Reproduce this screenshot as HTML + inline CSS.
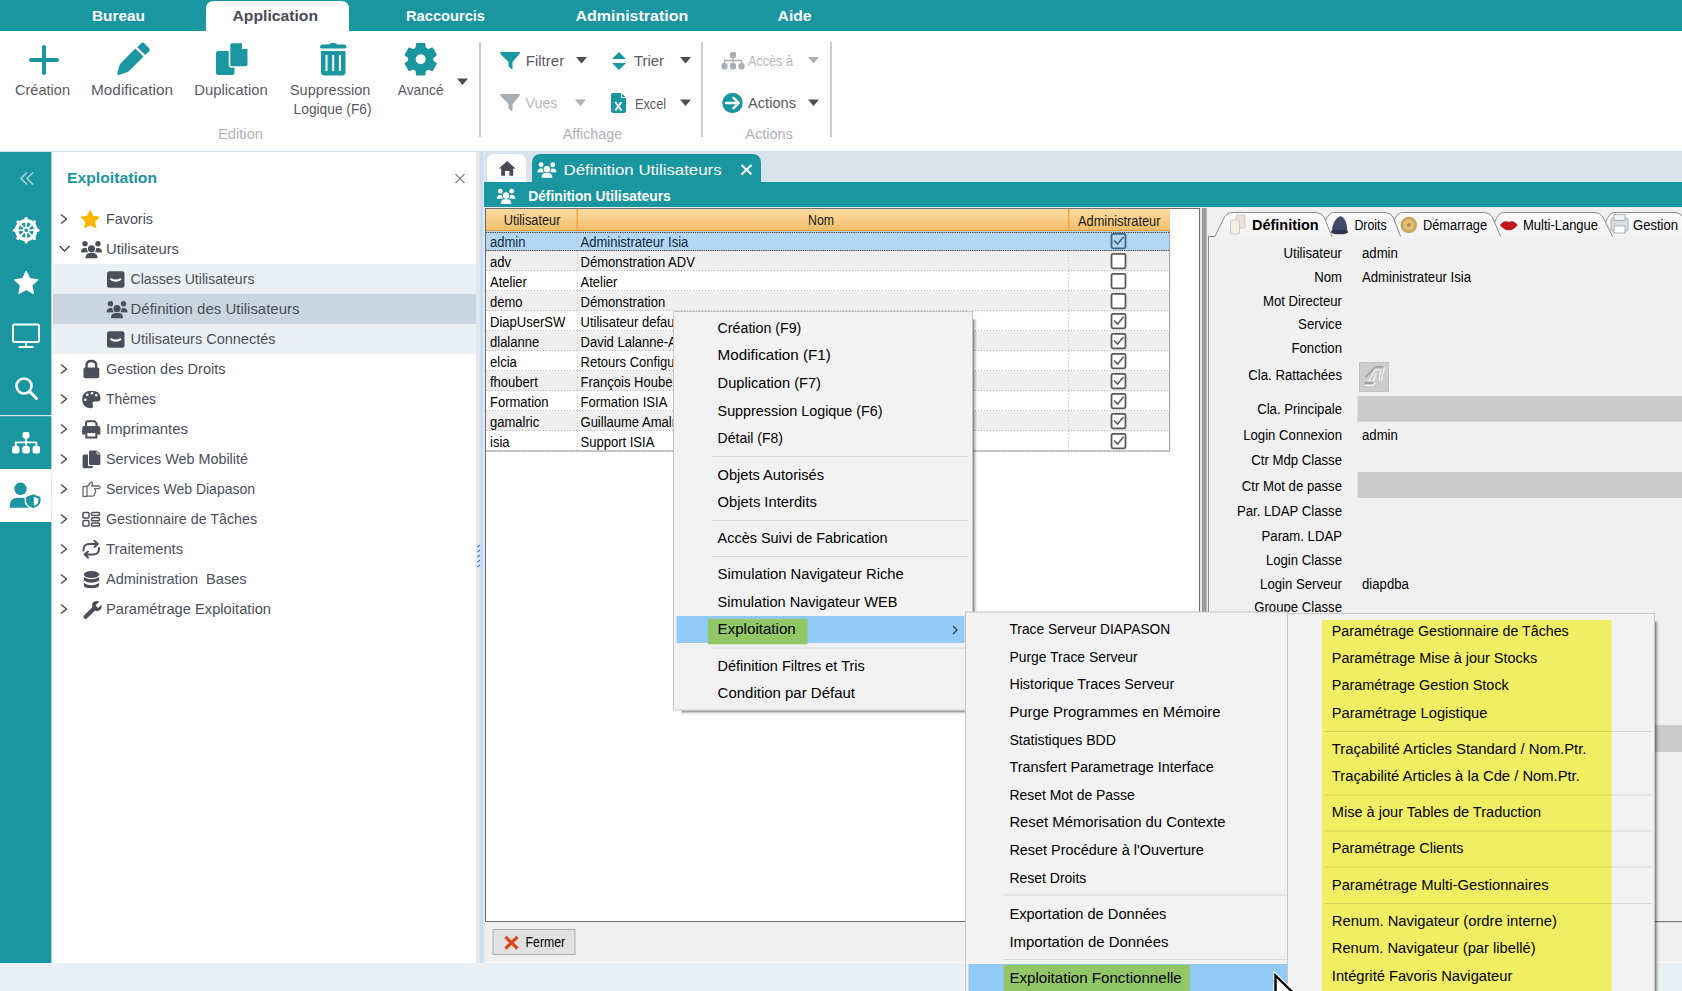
<!DOCTYPE html>
<html><head><meta charset="utf-8"><title>Définition Utilisateurs</title>
<style>
*{margin:0;padding:0}
html,body{width:1682px;height:991px;overflow:hidden;background:#fff}
svg{display:block;font-family:"Liberation Sans",sans-serif}
</style></head><body>
<svg width="1682" height="991" viewBox="0 0 1682 991">
<rect x="0" y="0" width="1682" height="31" fill="#1996a0" />
<path d="M206,31 V9 Q206,1 214,1 H341 Q349,1 349,9 V31 Z" fill="#fff"/>
<text x="92" y="21" font-size="15" fill="#fff" font-weight="bold" textLength="53" lengthAdjust="spacingAndGlyphs" >Bureau</text>
<text x="232.5" y="21" font-size="15" fill="#4a4a58" font-weight="bold" textLength="85.5" lengthAdjust="spacingAndGlyphs" >Application</text>
<text x="406" y="21" font-size="15" fill="#fff" font-weight="bold" textLength="79" lengthAdjust="spacingAndGlyphs" >Raccourcis</text>
<text x="575.5" y="21" font-size="15" fill="#fff" font-weight="bold" textLength="112.7" lengthAdjust="spacingAndGlyphs" >Administration</text>
<text x="777.6" y="21" font-size="15" fill="#fff" font-weight="bold" textLength="34" lengthAdjust="spacingAndGlyphs" >Aide</text>
<rect x="0" y="31" width="1682" height="120" fill="#fff" />
<rect x="0" y="151" width="1682" height="1" fill="#d5e0e8" />
<path d="M44,47 V73 M31,60 H57" stroke="#1996a0" stroke-width="4" stroke-linecap="round"/>
<path d="M117.8,75.2 Q117,74.5 117.5,72.5 L119.5,65.5 Q120,64 121.5,62.5 L135.4,48.6 L143.5,56.6 L129.5,70.5 Q128,72 126.5,72.5 L119.5,74.8 Q118.3,75.4 117.8,75.2 Z" fill="#1996a0"/>
<path d="M137.3,47.2 L141.2,43.3 Q142.7,41.8 144.2,43.3 L149.1,48.2 Q150.6,49.7 149.1,51.2 L145.2,55.1 Z" fill="#1996a0"/>
<path d="M218.5,51 H232 Q234.5,51 234.5,53.5 V72.5 Q234.5,75 232,75 H218.5 Q216,75 216,72.5 V53.5 Q216,51 218.5,51 Z" fill="#1996a0"/>
<path d="M232,42.5 H242.5 L248.3,48.3 V64.5 Q248.3,67 245.8,67 H232 Q229.5,67 229.5,64.5 V45 Q229.5,42.5 232,42.5 Z" fill="#1996a0" stroke="#fff" stroke-width="1.6"/>
<path d="M242.5,42 V48.3 H248.8" fill="#fff" stroke="#fff" stroke-width="1.2"/>
<path d="M320,47 Q320,44.5 323,44.5 H329 Q330,42.7 333,42.7 Q336,42.7 337,44.5 H343.5 Q346.5,44.5 346.5,47 Q346.5,48.5 343.5,48.5 H323 Q320,48.5 320,47 Z" fill="#1996a0"/>
<path d="M321,51 H345.5 V72 Q345.5,75.5 342,75.5 H324.5 Q321,75.5 321,72 Z" fill="#1996a0"/>
<path d="M326.5,55 V71 M333.2,55 V71 M339.9,55 V71" stroke="#fff" stroke-width="2"/>
<path d="M416.83,43.78 L424.57,43.78 L425.20,48.17 L428.09,49.84 L432.21,48.19 L436.08,54.89 L432.58,57.63 L432.58,60.97 L436.08,63.71 L432.21,70.41 L428.09,68.76 L425.20,70.43 L424.57,74.82 L416.83,74.82 L416.20,70.43 L413.31,68.76 L409.19,70.41 L405.32,63.71 L408.82,60.97 L408.82,57.63 L405.32,54.89 L409.19,48.19 L413.31,49.84 L416.20,48.17Z" fill="#1996a0" stroke="#1996a0" stroke-width="1.5" stroke-linejoin="round"/>
<circle cx="420.7" cy="59.3" r="5" fill="#fff"/>
<path d="M457,78.5 H468 L462.5,85.0 Z" fill="#4a4d57"/>
<text x="42.5" y="94.5" font-size="14.6" fill="#5a5a64" text-anchor="middle" textLength="55" lengthAdjust="spacingAndGlyphs" >Création</text>
<text x="132" y="94.5" font-size="14.6" fill="#5a5a64" text-anchor="middle" textLength="82" lengthAdjust="spacingAndGlyphs" >Modification</text>
<text x="231" y="94.5" font-size="14.6" fill="#5a5a64" text-anchor="middle" textLength="73.5" lengthAdjust="spacingAndGlyphs" >Duplication</text>
<text x="330.2" y="94.5" font-size="14.6" fill="#5a5a64" text-anchor="middle" textLength="80.5" lengthAdjust="spacingAndGlyphs" >Suppression</text>
<text x="420.7" y="94.5" font-size="14.6" fill="#5a5a64" text-anchor="middle" textLength="46" lengthAdjust="spacingAndGlyphs" >Avancé</text>
<text x="332.6" y="113.5" font-size="14.6" fill="#5a5a64" text-anchor="middle" textLength="78" lengthAdjust="spacingAndGlyphs" >Logique (F6)</text>
<text x="240.5" y="139" font-size="14" fill="#adb3ba" text-anchor="middle" textLength="45" lengthAdjust="spacingAndGlyphs" >Edition</text>
<rect x="479" y="42" width="2" height="95" fill="#c9cdd2" />
<rect x="701" y="42" width="2" height="95" fill="#c9cdd2" />
<rect x="830" y="42" width="2" height="95" fill="#c9cdd2" />
<path d="M500,52 H520 Q520,53 519,54.5 L512.5,62 V68.5 Q512.5,69.5 511.5,69 L508.5,66.5 V62 L501,54.5 Q500,53 500,52 Z" fill="#1996a0"/>
<text x="525.7" y="65.8" font-size="14.6" fill="#5a5a64" textLength="38.5" lengthAdjust="spacingAndGlyphs" >Filtrer</text>
<path d="M576,57 H587 L581.5,63.5 Z" fill="#4a4d57"/>
<path d="M619,52 L626,59 H612 Z M612,63 H626 L619,70 Z" fill="#1996a0"/>
<text x="634" y="65.8" font-size="14.6" fill="#5a5a64" textLength="30" lengthAdjust="spacingAndGlyphs" >Trier</text>
<path d="M680,57 H691 L685.5,63.5 Z" fill="#4a4d57"/>
<path d="M500,94 H520 Q520,95 519,96.5 L512.5,104 V110.5 Q512.5,111.5 511.5,111 L508.5,108.5 V104 L501,96.5 Q500,95 500,94 Z" fill="#a7aeb6"/>
<text x="525.5" y="108.3" font-size="14.6" fill="#b4bac1" textLength="32" lengthAdjust="spacingAndGlyphs" >Vues</text>
<path d="M575,99.5 H586 L580.5,106.0 Z" fill="#a9b0b8"/>
<path d="M613,93 H621.5 L626,97.5 V111 Q626,113 624,113 H613 Q611,113 611,111 V95 Q611,93 613,93 Z" fill="#1996a0"/>
<path d="M621.5,93 V97.5 H626" fill="none" stroke="#fff" stroke-width="1"/>
<path d="M615.3,102 L621.5,110.5 M621.5,102 L615.3,110.5" stroke="#fff" stroke-width="1.8"/>
<text x="635" y="108.6" font-size="14.6" fill="#5a5a64" textLength="31" lengthAdjust="spacingAndGlyphs" >Excel</text>
<path d="M680,99.5 H691 L685.5,106.0 Z" fill="#4a4d57"/>
<g fill="#a7aeb6"><rect x="730" y="52" width="6" height="6" rx="1.5"/><rect x="721.5" y="63" width="6" height="6.5" rx="2"/><rect x="730" y="63" width="6" height="6.5" rx="2"/><rect x="738.5" y="63" width="6" height="6.5" rx="2"/></g>
<path d="M733,58 V63 M724.5,63 V60.5 H741.5 V63" fill="none" stroke="#a7aeb6" stroke-width="1.3"/>
<text x="748" y="65.8" font-size="14.6" fill="#b4bac1" textLength="45" lengthAdjust="spacingAndGlyphs" >Accès à</text>
<path d="M808,57 H819 L813.5,63.5 Z" fill="#a9b0b8"/>
<circle cx="732.5" cy="103" r="10.2" fill="#1996a0"/>
<path d="M726,103 H738.5 M733.5,97.8 L738.8,103 L733.5,108.2" fill="none" stroke="#fff" stroke-width="2.4" stroke-linecap="round" stroke-linejoin="round"/>
<text x="748" y="107.8" font-size="14.6" fill="#5a5a64" textLength="48" lengthAdjust="spacingAndGlyphs" >Actions</text>
<path d="M808,99.5 H819 L813.5,106.0 Z" fill="#4a4d57"/>
<text x="592.5" y="139" font-size="14" fill="#adb3ba" text-anchor="middle" textLength="59.5" lengthAdjust="spacingAndGlyphs" >Affichage</text>
<text x="769" y="139" font-size="14" fill="#adb3ba" text-anchor="middle" textLength="47.5" lengthAdjust="spacingAndGlyphs" >Actions</text>
<rect x="0" y="152" width="51.6" height="811" fill="#1996a0" />
<path d="M27,172.5 L21,178.5 L27,184.5 M33,172.5 L27,178.5 L33,184.5" fill="none" stroke="#a6d0d4" stroke-width="1.6"/>
<circle cx="26.2" cy="230.2" r="11.2" fill="#fff"/>
<circle cx="37.80" cy="230.20" r="1.7" fill="#fff"/>
<circle cx="34.40" cy="238.40" r="1.7" fill="#fff"/>
<circle cx="26.20" cy="241.80" r="1.7" fill="#fff"/>
<circle cx="18.00" cy="238.40" r="1.7" fill="#fff"/>
<circle cx="14.60" cy="230.20" r="1.7" fill="#fff"/>
<circle cx="18.00" cy="222.00" r="1.7" fill="#fff"/>
<circle cx="26.20" cy="218.60" r="1.7" fill="#fff"/>
<circle cx="34.40" cy="222.00" r="1.7" fill="#fff"/>
<path d="M29.83,230.91 L33.83,231.27 A7.7,7.7 0 0 1 32.35,234.83 L29.27,232.27 Z M28.27,233.27 L30.83,236.35 A7.7,7.7 0 0 1 27.27,237.83 L26.91,233.83 Z M25.49,233.83 L25.13,237.83 A7.7,7.7 0 0 1 21.57,236.35 L24.13,233.27 Z M23.13,232.27 L20.05,234.83 A7.7,7.7 0 0 1 18.57,231.27 L22.57,230.91 Z M22.57,229.49 L18.57,229.13 A7.7,7.7 0 0 1 20.05,225.57 L23.13,228.13 Z M24.13,227.13 L21.57,224.05 A7.7,7.7 0 0 1 25.13,222.57 L25.49,226.57 Z M26.91,226.57 L27.27,222.57 A7.7,7.7 0 0 1 30.83,224.05 L28.27,227.13 Z M29.27,228.13 L32.35,225.57 A7.7,7.7 0 0 1 33.83,229.13 L29.83,229.49 Z " fill="#1996a0"/>
<circle cx="26.2" cy="230.2" r="1.7" fill="#1996a0"/>
<path d="M26.20,271.30 L29.73,278.65 L37.80,279.73 L31.91,285.35 L33.37,293.37 L26.20,289.50 L19.03,293.37 L20.49,285.35 L14.60,279.73 L22.67,278.65Z" fill="#fff" stroke="#fff" stroke-width="1.2" stroke-linejoin="round"/>
<rect x="13" y="324.6" width="26" height="17.5" rx="1.5" fill="none" stroke="#fff" stroke-width="2"/>
<path d="M26,342 V346.5 M18.5,347 H33.5" stroke="#fff" stroke-width="2"/>
<circle cx="24" cy="386" r="7.5" fill="none" stroke="#fff" stroke-width="2.6"/><path d="M29.5,391.5 L36.5,398.5" stroke="#fff" stroke-width="3" stroke-linecap="round"/>
<rect x="0" y="415" width="51.6" height="1.2" fill="#d4ebee" />
<g fill="#fff"><rect x="22.5" y="432" width="7" height="6.5" rx="2"/><rect x="12" y="446" width="7.5" height="7.5" rx="2"/><rect x="22.3" y="446" width="7.5" height="7.5" rx="2"/><rect x="32.5" y="446" width="7.5" height="7.5" rx="2"/></g>
<path d="M26,438 V446 M15.8,446 V442.3 H36.3 V446" fill="none" stroke="#fff" stroke-width="1.8"/>
<rect x="0" y="469" width="51.6" height="53" fill="#fff" />
<circle cx="20.5" cy="488.8" r="6.2" fill="#1996a0"/>
<path d="M9.5,507.8 Q9.5,497.8 17,497.8 H25 Q28,497.8 29.5,499.5 V507.8 Z" fill="#1996a0"/>
<path d="M33.3,492.5 L42,495.8 V501 Q42,507 33.3,509.5 Q24.6,507 24.6,501 V495.8 Z" fill="#fff"/>
<path d="M33.3,494.3 L40.5,497 V501 Q40.5,505.8 33.3,508 Q26.1,505.8 26.1,501 V497 Z" fill="#1996a0"/>
<path d="M33.8,496.8 L38.3,498.6 V501.2 Q38.3,504.3 33.8,505.8 Z" fill="#fff"/>
<rect x="51.6" y="152" width="424.4" height="811" fill="#fff" />
<text x="67" y="183" font-size="15.5" fill="#1996a0" font-weight="bold" textLength="90" lengthAdjust="spacingAndGlyphs" >Exploitation</text>
<path d="M455.5,174 L464.5,183 M464.5,174 L455.5,183" stroke="#8a9099" stroke-width="1.4"/>
<rect x="53" y="264" width="423" height="30" fill="#ebf0f4" />
<rect x="53" y="294" width="423" height="30" fill="#c9d6e0" />
<rect x="53" y="324" width="423" height="30" fill="#ebf0f4" />
<path d="M61,214.5 L66.5,219 L61,223.5" fill="none" stroke="#4b4f5b" stroke-width="1.5"/>
<text x="106" y="224" font-size="14.2" fill="#4b4f5b" textLength="47" lengthAdjust="spacingAndGlyphs" >Favoris</text>
<path d="M59.5,246 L64.5,251 L69.5,246" fill="none" stroke="#4b4f5b" stroke-width="1.5"/>
<text x="106" y="254" font-size="14.2" fill="#4b4f5b" textLength="73" lengthAdjust="spacingAndGlyphs" >Utilisateurs</text>
<text x="130.5" y="284" font-size="14.2" fill="#4b4f5b" textLength="124" lengthAdjust="spacingAndGlyphs" >Classes Utilisateurs</text>
<text x="130.5" y="314" font-size="14.2" fill="#4b4f5b" textLength="169" lengthAdjust="spacingAndGlyphs" >Définition des Utilisateurs</text>
<text x="130.5" y="344" font-size="14.2" fill="#4b4f5b" textLength="145" lengthAdjust="spacingAndGlyphs" >Utilisateurs Connectés</text>
<path d="M61,364.5 L66.5,369 L61,373.5" fill="none" stroke="#4b4f5b" stroke-width="1.5"/>
<text x="106" y="374" font-size="14.2" fill="#4b4f5b" textLength="119.5" lengthAdjust="spacingAndGlyphs" >Gestion des Droits</text>
<path d="M61,394.5 L66.5,399 L61,403.5" fill="none" stroke="#4b4f5b" stroke-width="1.5"/>
<text x="106" y="404" font-size="14.2" fill="#4b4f5b" textLength="50" lengthAdjust="spacingAndGlyphs" >Thèmes</text>
<path d="M61,424.5 L66.5,429 L61,433.5" fill="none" stroke="#4b4f5b" stroke-width="1.5"/>
<text x="106" y="434" font-size="14.2" fill="#4b4f5b" textLength="82" lengthAdjust="spacingAndGlyphs" >Imprimantes</text>
<path d="M61,454.5 L66.5,459 L61,463.5" fill="none" stroke="#4b4f5b" stroke-width="1.5"/>
<text x="106" y="464" font-size="14.2" fill="#4b4f5b" textLength="142" lengthAdjust="spacingAndGlyphs" >Services Web Mobilité</text>
<path d="M61,484.5 L66.5,489 L61,493.5" fill="none" stroke="#4b4f5b" stroke-width="1.5"/>
<text x="106" y="494" font-size="14.2" fill="#4b4f5b" textLength="149" lengthAdjust="spacingAndGlyphs" >Services Web Diapason</text>
<path d="M61,514.5 L66.5,519 L61,523.5" fill="none" stroke="#4b4f5b" stroke-width="1.5"/>
<text x="106" y="524" font-size="14.2" fill="#4b4f5b" textLength="151" lengthAdjust="spacingAndGlyphs" >Gestionnaire de Tâches</text>
<path d="M61,544.5 L66.5,549 L61,553.5" fill="none" stroke="#4b4f5b" stroke-width="1.5"/>
<text x="106" y="554" font-size="14.2" fill="#4b4f5b" textLength="77" lengthAdjust="spacingAndGlyphs" >Traitements</text>
<path d="M61,574.5 L66.5,579 L61,583.5" fill="none" stroke="#4b4f5b" stroke-width="1.5"/>
<text x="106" y="584" font-size="14.2" fill="#4b4f5b" textLength="140.5" lengthAdjust="spacingAndGlyphs" >Administration  Bases</text>
<path d="M61,604.5 L66.5,609 L61,613.5" fill="none" stroke="#4b4f5b" stroke-width="1.5"/>
<text x="106" y="614" font-size="14.2" fill="#4b4f5b" textLength="165" lengthAdjust="spacingAndGlyphs" >Paramétrage Exploitation</text>
<path d="M90.20,210.70 L92.90,216.28 L99.04,217.13 L94.57,221.42 L95.67,227.52 L90.20,224.60 L84.73,227.52 L85.83,221.42 L81.36,217.13 L87.50,216.28Z" fill="#fbb600" stroke="#fbb600" stroke-width="1.2" stroke-linejoin="round"/>
<g fill="#4b4f5b" transform="translate(81,240.8) scale(1.0)"><circle cx="4" cy="3" r="2.7"/><circle cx="17" cy="3" r="2.7"/><circle cx="10.5" cy="8" r="3.6"/><path d="M0,11.8 Q0,7.3 3.8,7.3 H5.6 Q6,9.5 7,11.5 Z"/><path d="M21,11.8 Q21,7.3 17.2,7.3 H15.4 Q15,9.5 14,11.5 Z"/><path d="M4.5,17.5 Q4.5,12.3 9,12.3 H12 Q16.5,12.3 16.5,17.5 Z"/></g>
<rect x="107" y="271.3" width="17.5" height="16.5" rx="2.5" fill="#4b4f5b"/>
<path d="M110.5,278.8 Q115.75,282.3 121,278.8" fill="none" stroke="#fff" stroke-width="2.2"/>
<g fill="#4b4f5b" transform="translate(106.5,300.7) scale(1.0)"><circle cx="4" cy="3" r="2.7"/><circle cx="17" cy="3" r="2.7"/><circle cx="10.5" cy="8" r="3.6"/><path d="M0,11.8 Q0,7.3 3.8,7.3 H5.6 Q6,9.5 7,11.5 Z"/><path d="M21,11.8 Q21,7.3 17.2,7.3 H15.4 Q15,9.5 14,11.5 Z"/><path d="M4.5,17.5 Q4.5,12.3 9,12.3 H12 Q16.5,12.3 16.5,17.5 Z"/></g>
<rect x="107" y="331.3" width="17.5" height="16.5" rx="2.5" fill="#4b4f5b"/>
<path d="M110.5,338.8 Q115.75,342.3 121,338.8" fill="none" stroke="#fff" stroke-width="2.2"/>
<path d="M86.5,368 V365.5 Q86.5,361 91.3,361 Q96.2,361 96.2,365.5 V368" fill="none" stroke="#4b4f5b" stroke-width="2.4"/>
<rect x="83.5" y="367.5" width="15.8" height="10.8" rx="1.8" fill="#4b4f5b"/>
<path d="M91.3,390.8 Q100.5,390.8 100.5,398.2 Q100.5,401.5 97.5,401.5 H94.5 Q92,401.5 92.5,404 Q93.5,406 92.7,407.5 Q92,408.5 90.5,408.3 Q82.2,407.5 82.2,399.5 Q82.2,390.8 91.3,390.8 Z" fill="#4b4f5b"/>
<circle cx="85.3" cy="399.8" r="1.3" fill="#fff"/>
<circle cx="87.3" cy="394.8" r="1.3" fill="#fff"/>
<circle cx="92" cy="393.2" r="1.3" fill="#fff"/>
<circle cx="96.3" cy="395.3" r="1.3" fill="#fff"/>
<path d="M86,427 V423 Q86,421.3 87.7,421.3 H94.5 L96.5,423.3 V427" fill="none" stroke="#4b4f5b" stroke-width="2"/>
<path d="M84,426 H98.5 Q100.4,426 100.4,428 V434.5 H97 V431.5 H85.5 V434.5 H82.2 V428 Q82.2,426 84,426 Z" fill="#4b4f5b"/>
<rect x="86.3" y="432" width="10" height="5.5" fill="none" stroke="#4b4f5b" stroke-width="2"/>
<path d="M82.6,456 Q82.6,454.5 84,454.5 H88 V466 H93 Q93,468.2 91.5,468.2 H84 Q82.6,468.2 82.6,466.8 Z" fill="#4b4f5b"/>
<path d="M90.5,450.6 H97 L100.4,454 V463.5 Q100.4,465 99,465 H90.5 Q89,465 89,463.5 V452 Q89,450.6 90.5,450.6 Z" fill="#4b4f5b"/>
<path d="M97,450.6 V454 H100.4" fill="none" stroke="#fff" stroke-width="0.8"/>
<path d="M83,486.5 H87 V496.5 H83 Z M87,487 L90.5,482.5 Q92,481.5 92.5,483 L91.8,486 H99 Q100,486 100,487.3 Q100,488.6 99,488.6 H94.5 Q96,489.5 95.5,491 Q96,493 94.5,493.5 Q95,495.5 93,496.2 H87" fill="none" stroke="#6a6f78" stroke-width="1.3" stroke-linejoin="round"/>
<g fill="none" stroke="#4b4f5b" stroke-width="1.5"><rect x="83" y="512.5" width="6" height="5.5" rx="1"/><rect x="83" y="520.5" width="6" height="5.5" rx="1"/><rect x="91.5" y="512.5" width="8" height="3" rx="1"/><rect x="91.5" y="517.8" width="8" height="3" rx="1"/><rect x="91.5" y="523" width="8" height="3" rx="1"/></g>
<path d="M83.5,550.5 Q83,544 89.5,544 H97.5 M94.5,541 L97.8,544 L94.5,547 M99,548 Q99.5,554.6 93,554.6 H85 M88,551.6 L84.7,554.6 L88,557.6" fill="none" stroke="#4b4f5b" stroke-width="2" stroke-linecap="round" stroke-linejoin="round"/>
<g fill="#4b4f5b"><ellipse cx="91.5" cy="574.5" rx="7.7" ry="3.5"/><path d="M83.8,577 Q91.5,581.5 99.2,577 V580.5 Q91.5,585 83.8,580.5 Z"/><path d="M83.8,583 Q91.5,587.5 99.2,583 V585 Q99.2,588.2 91.5,588.2 Q83.8,588.2 83.8,585 Z"/></g>
<path d="M84,615.5 L92.5,607 Q91,602.5 94.5,601.5 Q97,600.5 99.3,601.8 L95.7,605 L96.5,607 L98.5,607.7 L101.5,604.5 Q102.3,608 100,610 Q97.5,612 95.2,610.5 L86.8,618.5 Q85.3,619.7 84,618.3 Q82.8,617 84,615.5 Z" fill="#4b4f5b"/>
<rect x="476" y="152" width="9" height="811" fill="#dfe6ee" />
<rect x="480" y="152" width="3" height="811" fill="#c8dcf4" />
<path d="M477.5,547 L480,545" stroke="#3a7bd5" stroke-width="1.2"/>
<path d="M477.5,552 L480,550" stroke="#3a7bd5" stroke-width="1.2"/>
<path d="M477.5,557 L480,555" stroke="#3a7bd5" stroke-width="1.2"/>
<path d="M477.5,562 L480,560" stroke="#3a7bd5" stroke-width="1.2"/>
<path d="M477.5,567 L480,565" stroke="#3a7bd5" stroke-width="1.2"/>
<rect x="485" y="152" width="1197" height="30" fill="#d9e3ec" />
<path d="M487,182 V162 Q487,154 495,154 H518 Q526,154 526,162 V182 Z" fill="#fff"/>
<path d="M507.2,161 L498.8,168.5 H501.2 V175.7 H505 V171 H509.4 V175.7 H513.2 V168.5 H515.6 Z" fill="#474b57"/>
<path d="M532,182 V163 Q532,154 541,154 H752 Q761,154 761,163 V182 Z" fill="#1996a0"/>
<g fill="#fff" transform="translate(537.5,162) scale(0.9)"><circle cx="4" cy="3" r="2.7"/><circle cx="17" cy="3" r="2.7"/><circle cx="10.5" cy="8" r="3.6"/><path d="M0,11.8 Q0,7.3 3.8,7.3 H5.6 Q6,9.5 7,11.5 Z"/><path d="M21,11.8 Q21,7.3 17.2,7.3 H15.4 Q15,9.5 14,11.5 Z"/><path d="M4.5,17.5 Q4.5,12.3 9,12.3 H12 Q16.5,12.3 16.5,17.5 Z"/></g>
<text x="563.6" y="175" font-size="15.2" fill="#fff" textLength="158" lengthAdjust="spacingAndGlyphs" >Définition Utilisateurs</text>
<path d="M741.5,165 L751.5,174.5 M751.5,165 L741.5,174.5" stroke="#fff" stroke-width="2"/>
<rect x="484" y="182" width="1198" height="25" fill="#1996a0" />
<g fill="#fff" transform="translate(496.8,188.5) scale(0.88)"><circle cx="4" cy="3" r="2.7"/><circle cx="17" cy="3" r="2.7"/><circle cx="10.5" cy="8" r="3.6"/><path d="M0,11.8 Q0,7.3 3.8,7.3 H5.6 Q6,9.5 7,11.5 Z"/><path d="M21,11.8 Q21,7.3 17.2,7.3 H15.4 Q15,9.5 14,11.5 Z"/><path d="M4.5,17.5 Q4.5,12.3 9,12.3 H12 Q16.5,12.3 16.5,17.5 Z"/></g>
<text x="528.2" y="200.7" font-size="14" fill="#fff" textLength="142.5" lengthAdjust="spacingAndGlyphs" font-weight="600">Définition Utilisateurs</text>
<rect x="485" y="207" width="1197" height="756" fill="#f0f0f0" />
<rect x="485" y="208" width="715" height="714" fill="#fff" />
<rect x="485.5" y="208.5" width="714" height="713" fill="none" stroke="#6e6e6e" stroke-width="1"/>
<defs><linearGradient id="hdr" x1="0" y1="0" x2="0" y2="1"><stop offset="0" stop-color="#fbdba2"/><stop offset="1" stop-color="#f0bd67"/></linearGradient><linearGradient id="tabg" x1="0" y1="0" x2="0" y2="1"><stop offset="0" stop-color="#fbfbfb"/><stop offset="1" stop-color="#f0f0f0"/></linearGradient></defs>
<rect x="486" y="209" width="684" height="22" fill="url(#hdr)" />
<rect x="486" y="230" width="684" height="1.5" fill="#f39c2f" />
<rect x="576.5" y="209" width="1.5" height="22" fill="#f5a443" />
<rect x="1068" y="209" width="1.5" height="22" fill="#f5a443" />
<text x="503.7" y="225.4" font-size="14" fill="#1a1a1a" textLength="56.7" lengthAdjust="spacingAndGlyphs" >Utilisateur</text>
<text x="808" y="225.4" font-size="14" fill="#1a1a1a" textLength="26" lengthAdjust="spacingAndGlyphs" >Nom</text>
<text x="1078" y="225.6" font-size="14" fill="#1a1a1a" textLength="82.5" lengthAdjust="spacingAndGlyphs" >Administrateur</text>
<rect x="486" y="231" width="683" height="20" fill="#b3d6f2" />
<path d="M486,232.5 H1169 M486,250.5 H1169" stroke="#4a3a2a" stroke-width="1" stroke-dasharray="1.2,1"/>
<path d="M577.5,231 V251 M1068.5,231 V251" stroke="#c8c8c8" stroke-width="1" stroke-dasharray="1,2"/>
<text x="490" y="246.5" font-size="14" fill="#0d2a48" textLength="35.46" lengthAdjust="spacingAndGlyphs" >admin</text>
<text x="580.5" y="246.5" font-size="14" fill="#0d2a48" textLength="107.81" lengthAdjust="spacingAndGlyphs" >Administrateur Isia</text>
<rect x="1111.5" y="233.8" width="14" height="14.5" rx="1.5" fill="none" stroke="#3b6688" stroke-width="1.8"/>
<path d="M1114,240.5 L1117.5,244 L1123.5,237" fill="none" stroke="#3b6688" stroke-width="1.6"/>
<rect x="486" y="251" width="683" height="20" fill="#efefef" />
<path d="M486,270.5 H1169" stroke="#b8b8b8" stroke-width="1" stroke-dasharray="1,2"/>
<path d="M577.5,251 V271 M1068.5,251 V271" stroke="#c8c8c8" stroke-width="1" stroke-dasharray="1,2"/>
<text x="490" y="266.5" font-size="14" fill="#000" textLength="20.99" lengthAdjust="spacingAndGlyphs" >adv</text>
<text x="580.5" y="266.5" font-size="14" fill="#000" textLength="114.33" lengthAdjust="spacingAndGlyphs" >Démonstration ADV</text>
<rect x="1111.5" y="253.8" width="14" height="14.5" rx="1.5" fill="#fff" stroke="#5a5a5a" stroke-width="1.8"/>
<rect x="486" y="271" width="683" height="20" fill="#ffffff" />
<path d="M486,290.5 H1169" stroke="#b8b8b8" stroke-width="1" stroke-dasharray="1,2"/>
<path d="M577.5,271 V291 M1068.5,271 V291" stroke="#c8c8c8" stroke-width="1" stroke-dasharray="1,2"/>
<text x="490" y="286.5" font-size="14" fill="#000" textLength="36.9" lengthAdjust="spacingAndGlyphs" >Atelier</text>
<text x="580.5" y="286.5" font-size="14" fill="#000" textLength="36.9" lengthAdjust="spacingAndGlyphs" >Atelier</text>
<rect x="1111.5" y="273.8" width="14" height="14.5" rx="1.5" fill="#fff" stroke="#5a5a5a" stroke-width="1.8"/>
<rect x="486" y="291" width="683" height="20" fill="#efefef" />
<path d="M486,310.5 H1169" stroke="#b8b8b8" stroke-width="1" stroke-dasharray="1,2"/>
<path d="M577.5,291 V311 M1068.5,291 V311" stroke="#c8c8c8" stroke-width="1" stroke-dasharray="1,2"/>
<text x="490" y="306.5" font-size="14" fill="#000" textLength="32.57" lengthAdjust="spacingAndGlyphs" >demo</text>
<text x="580.5" y="306.5" font-size="14" fill="#000" textLength="84.66" lengthAdjust="spacingAndGlyphs" >Démonstration</text>
<rect x="1111.5" y="293.8" width="14" height="14.5" rx="1.5" fill="#fff" stroke="#5a5a5a" stroke-width="1.8"/>
<rect x="486" y="311" width="683" height="20" fill="#ffffff" />
<path d="M486,330.5 H1169" stroke="#b8b8b8" stroke-width="1" stroke-dasharray="1,2"/>
<path d="M577.5,311 V331 M1068.5,311 V331" stroke="#c8c8c8" stroke-width="1" stroke-dasharray="1,2"/>
<text x="490" y="326.5" font-size="14" fill="#000" textLength="75.24" lengthAdjust="spacingAndGlyphs" >DiapUserSW</text>
<text x="580.5" y="326.5" font-size="14" fill="#000" textLength="97.69" lengthAdjust="spacingAndGlyphs" >Utilisateur defaut</text>
<rect x="1111.5" y="313.8" width="14" height="14.5" rx="1.5" fill="#fff" stroke="#5a5a5a" stroke-width="1.8"/>
<path d="M1114,320.5 L1117.5,324 L1123.5,317" fill="none" stroke="#5a5a5a" stroke-width="1.6"/>
<rect x="486" y="331" width="683" height="20" fill="#efefef" />
<path d="M486,350.5 H1169" stroke="#b8b8b8" stroke-width="1" stroke-dasharray="1,2"/>
<path d="M577.5,331 V351 M1068.5,331 V351" stroke="#c8c8c8" stroke-width="1" stroke-dasharray="1,2"/>
<text x="490" y="346.5" font-size="14" fill="#000" textLength="49.23" lengthAdjust="spacingAndGlyphs" >dlalanne</text>
<text x="580.5" y="346.5" font-size="14" fill="#000" textLength="129.56" lengthAdjust="spacingAndGlyphs" >David Lalanne-Arnaud</text>
<rect x="1111.5" y="333.8" width="14" height="14.5" rx="1.5" fill="#fff" stroke="#5a5a5a" stroke-width="1.8"/>
<path d="M1114,340.5 L1117.5,344 L1123.5,337" fill="none" stroke="#5a5a5a" stroke-width="1.6"/>
<rect x="486" y="351" width="683" height="20" fill="#ffffff" />
<path d="M486,370.5 H1169" stroke="#b8b8b8" stroke-width="1" stroke-dasharray="1,2"/>
<path d="M577.5,351 V371 M1068.5,351 V371" stroke="#c8c8c8" stroke-width="1" stroke-dasharray="1,2"/>
<text x="490" y="366.5" font-size="14" fill="#000" textLength="26.78" lengthAdjust="spacingAndGlyphs" >elcia</text>
<text x="580.5" y="366.5" font-size="14" fill="#000" textLength="126.64" lengthAdjust="spacingAndGlyphs" >Retours Configuration</text>
<rect x="1111.5" y="353.8" width="14" height="14.5" rx="1.5" fill="#fff" stroke="#5a5a5a" stroke-width="1.8"/>
<path d="M1114,360.5 L1117.5,364 L1123.5,357" fill="none" stroke="#5a5a5a" stroke-width="1.6"/>
<rect x="486" y="371" width="683" height="20" fill="#efefef" />
<path d="M486,390.5 H1169" stroke="#b8b8b8" stroke-width="1" stroke-dasharray="1,2"/>
<path d="M577.5,371 V391 M1068.5,371 V391" stroke="#c8c8c8" stroke-width="1" stroke-dasharray="1,2"/>
<text x="490" y="386.5" font-size="14" fill="#000" textLength="47.77" lengthAdjust="spacingAndGlyphs" >fhoubert</text>
<text x="580.5" y="386.5" font-size="14" fill="#000" textLength="99.86" lengthAdjust="spacingAndGlyphs" >François Houbert</text>
<rect x="1111.5" y="373.8" width="14" height="14.5" rx="1.5" fill="#fff" stroke="#5a5a5a" stroke-width="1.8"/>
<path d="M1114,380.5 L1117.5,384 L1123.5,377" fill="none" stroke="#5a5a5a" stroke-width="1.6"/>
<rect x="486" y="391" width="683" height="20" fill="#ffffff" />
<path d="M486,410.5 H1169" stroke="#b8b8b8" stroke-width="1" stroke-dasharray="1,2"/>
<path d="M577.5,391 V411 M1068.5,391 V411" stroke="#c8c8c8" stroke-width="1" stroke-dasharray="1,2"/>
<text x="490" y="406.5" font-size="14" fill="#000" textLength="58.6" lengthAdjust="spacingAndGlyphs" >Formation</text>
<text x="580.5" y="406.5" font-size="14" fill="#000" textLength="86.83" lengthAdjust="spacingAndGlyphs" >Formation ISIA</text>
<rect x="1111.5" y="393.8" width="14" height="14.5" rx="1.5" fill="#fff" stroke="#5a5a5a" stroke-width="1.8"/>
<path d="M1114,400.5 L1117.5,404 L1123.5,397" fill="none" stroke="#5a5a5a" stroke-width="1.6"/>
<rect x="486" y="411" width="683" height="20" fill="#efefef" />
<path d="M486,430.5 H1169" stroke="#b8b8b8" stroke-width="1" stroke-dasharray="1,2"/>
<path d="M577.5,411 V431 M1068.5,411 V431" stroke="#c8c8c8" stroke-width="1" stroke-dasharray="1,2"/>
<text x="490" y="426.5" font-size="14" fill="#000" textLength="49.2" lengthAdjust="spacingAndGlyphs" >gamalric</text>
<text x="580.5" y="426.5" font-size="14" fill="#000" textLength="104.91" lengthAdjust="spacingAndGlyphs" >Guillaume Amalric</text>
<rect x="1111.5" y="413.8" width="14" height="14.5" rx="1.5" fill="#fff" stroke="#5a5a5a" stroke-width="1.8"/>
<path d="M1114,420.5 L1117.5,424 L1123.5,417" fill="none" stroke="#5a5a5a" stroke-width="1.6"/>
<rect x="486" y="431" width="683" height="20" fill="#ffffff" />
<path d="M486,450.5 H1169" stroke="#b8b8b8" stroke-width="1" stroke-dasharray="1,2"/>
<path d="M577.5,431 V451 M1068.5,431 V451" stroke="#c8c8c8" stroke-width="1" stroke-dasharray="1,2"/>
<text x="490" y="446.5" font-size="14" fill="#000" textLength="19.54" lengthAdjust="spacingAndGlyphs" >isia</text>
<text x="580.5" y="446.5" font-size="14" fill="#000" textLength="73.82" lengthAdjust="spacingAndGlyphs" >Support ISIA</text>
<rect x="1111.5" y="433.8" width="14" height="14.5" rx="1.5" fill="#fff" stroke="#5a5a5a" stroke-width="1.8"/>
<path d="M1114,440.5 L1117.5,444 L1123.5,437" fill="none" stroke="#5a5a5a" stroke-width="1.6"/>
<rect x="1169" y="231" width="1.2" height="220" fill="#a8a8a8" />
<rect x="486" y="450.5" width="684" height="1.2" fill="#a8a8a8" />
<rect x="1200" y="208" width="8" height="714" fill="#e6e6e6" />
<rect x="1202" y="208" width="4.5" height="714" fill="#9b9b9b" />
<path d="M1605.6,222.5 Q1609.1,212.5 1614.6,212.5 H1675 Q1680,212.5 1683,217 L1692,236.5 V240 H1601.6 Z" fill="url(#tabg)"/>
<path d="M1605.6,222.5 Q1609.1,212.5 1614.6,212.5 H1675 Q1680,212.5 1683,217 L1692,236.5" fill="none" stroke="#8c8c8c" stroke-width="1"/>
<path d="M1494.6,222.5 Q1498.1,212.5 1503.6,212.5 H1595 Q1600,212.5 1603,217 L1612.5,236.5 V240 H1490.6 Z" fill="url(#tabg)"/>
<path d="M1494.6,222.5 Q1498.1,212.5 1503.6,212.5 H1595 Q1600,212.5 1603,217 L1612.5,236.5" fill="none" stroke="#8c8c8c" stroke-width="1"/>
<path d="M1393.3,222.5 Q1396.8,212.5 1402.3,212.5 H1484.3 Q1489.3,212.5 1492.3,217 L1500.6,236.5 V240 H1389.3 Z" fill="url(#tabg)"/>
<path d="M1393.3,222.5 Q1396.8,212.5 1402.3,212.5 H1484.3 Q1489.3,212.5 1492.3,217 L1500.6,236.5" fill="none" stroke="#8c8c8c" stroke-width="1"/>
<path d="M1324.7,222.5 Q1328.2,212.5 1333.7,212.5 H1385 Q1390,212.5 1393,217 L1400.6,236.5 V240 H1320.7 Z" fill="url(#tabg)"/>
<path d="M1324.7,222.5 Q1328.2,212.5 1333.7,212.5 H1385 Q1390,212.5 1393,217 L1400.6,236.5" fill="none" stroke="#8c8c8c" stroke-width="1"/>
<path d="M1215,236.5 L1223,220 Q1226,212.5 1232,212.5 H1316 Q1321,212.5 1324,217 L1332,236.5 V240 H1215 Z" fill="url(#tabg)"/>
<path d="M1208.5,921 V236.5 H1215 L1223,220 Q1226,212.5 1232,212.5 H1316 Q1321,212.5 1324,217 L1332,236.5" fill="none" stroke="#8c8c8c" stroke-width="1"/>
<rect x="1209" y="237" width="473" height="4" fill="#f0f0f0" />
<g><rect x="1236" y="215" width="9" height="13" rx="1" fill="#e9e2d6" stroke="#c9bfae" stroke-width="0.8"/><rect x="1230.5" y="220" width="9" height="14" rx="1" fill="#f4efe4" stroke="#c9bfae" stroke-width="0.8"/></g>
<text x="1252" y="229.6" font-size="14" fill="#000" font-weight="bold" textLength="66.7" lengthAdjust="spacingAndGlyphs" >Définition</text>
<path d="M1331.5,232 Q1333,219 1340.5,216 Q1347,218 1347.5,232 Z" fill="#3e4a66"/><ellipse cx="1339.5" cy="232" rx="8.5" ry="2.3" fill="#2c3550"/>
<text x="1354.4" y="229.6" font-size="14" fill="#000" textLength="32.2" lengthAdjust="spacingAndGlyphs" >Droits</text>
<circle cx="1408.8" cy="225" r="8.3" fill="#c9a45c"/><circle cx="1408.8" cy="225" r="5.5" fill="#e0c07a"/><circle cx="1408.8" cy="225" r="2" fill="#b08a40"/>
<text x="1423" y="229.6" font-size="14" fill="#000" textLength="64" lengthAdjust="spacingAndGlyphs" >Démarrage</text>
<path d="M1500,225 Q1504,219.5 1508.8,222 Q1513.5,219.5 1517.7,225 Q1513,231 1508.8,230 Q1504.5,231 1500,225 Z" fill="#c0161e"/>
<text x="1523" y="229.6" font-size="14" fill="#000" textLength="75" lengthAdjust="spacingAndGlyphs" >Multi-Langue</text>
<rect x="1611" y="218" width="17" height="13" rx="1.5" fill="#d9dde3" stroke="#9aa3ad" stroke-width="0.8"/><rect x="1614" y="214.5" width="11" height="6" fill="#f4f4f4" stroke="#9aa3ad" stroke-width="0.8"/><rect x="1614" y="226" width="11" height="7" fill="#fff" stroke="#9aa3ad" stroke-width="0.8"/>
<text x="1633" y="229.6" font-size="14" fill="#000" textLength="45" lengthAdjust="spacingAndGlyphs" >Gestion</text>
<rect x="1357.5" y="396" width="325" height="25.6" fill="#cbcbcb" />
<rect x="1357.5" y="472" width="325" height="26" fill="#cbcbcb" />
<rect x="1357.5" y="725" width="325" height="27" fill="#cbcbcb" />
<text x="1342" y="258.2" font-size="14" fill="#000" text-anchor="end" textLength="58.5" lengthAdjust="spacingAndGlyphs" >Utilisateur</text>
<text x="1362" y="258.2" font-size="14" fill="#000" textLength="35.84" lengthAdjust="spacingAndGlyphs" >admin</text>
<text x="1342" y="281.7" font-size="14" fill="#000" text-anchor="end" textLength="27.78" lengthAdjust="spacingAndGlyphs" >Nom</text>
<text x="1362" y="281.7" font-size="14" fill="#000" textLength="108.97" lengthAdjust="spacingAndGlyphs" >Administrateur Isia</text>
<text x="1342" y="305.6" font-size="14" fill="#000" text-anchor="end" textLength="78.97" lengthAdjust="spacingAndGlyphs" >Mot Directeur</text>
<text x="1342" y="329" font-size="14" fill="#000" text-anchor="end" textLength="43.88" lengthAdjust="spacingAndGlyphs" >Service</text>
<text x="1342" y="353.3" font-size="14" fill="#000" text-anchor="end" textLength="50.47" lengthAdjust="spacingAndGlyphs" >Fonction</text>
<text x="1342" y="379.7" font-size="14" fill="#000" text-anchor="end" textLength="93.63" lengthAdjust="spacingAndGlyphs" >Cla. Rattachées</text>
<text x="1342" y="414" font-size="14" fill="#000" text-anchor="end" textLength="84.84" lengthAdjust="spacingAndGlyphs" >Cla. Principale</text>
<text x="1342" y="440.3" font-size="14" fill="#000" text-anchor="end" textLength="98.77" lengthAdjust="spacingAndGlyphs" >Login Connexion</text>
<text x="1362" y="440.3" font-size="14" fill="#000" textLength="35.84" lengthAdjust="spacingAndGlyphs" >admin</text>
<text x="1342" y="464.6" font-size="14" fill="#000" text-anchor="end" textLength="90.68" lengthAdjust="spacingAndGlyphs" >Ctr Mdp Classe</text>
<text x="1342" y="491" font-size="14" fill="#000" text-anchor="end" textLength="100.2" lengthAdjust="spacingAndGlyphs" >Ctr Mot de passe</text>
<text x="1342" y="516.4" font-size="14" fill="#000" text-anchor="end" textLength="105.08" lengthAdjust="spacingAndGlyphs" >Par. LDAP Classe</text>
<text x="1342" y="540.7" font-size="14" fill="#000" text-anchor="end" textLength="80.45" lengthAdjust="spacingAndGlyphs" >Param. LDAP</text>
<text x="1342" y="564.7" font-size="14" fill="#000" text-anchor="end" textLength="76.08" lengthAdjust="spacingAndGlyphs" >Login Classe</text>
<text x="1342" y="589" font-size="14" fill="#000" text-anchor="end" textLength="81.93" lengthAdjust="spacingAndGlyphs" >Login Serveur</text>
<text x="1362" y="589" font-size="14" fill="#000" textLength="46.83" lengthAdjust="spacingAndGlyphs" >diapdba</text>
<text x="1342" y="612.4" font-size="14" fill="#000" text-anchor="end" textLength="87.77" lengthAdjust="spacingAndGlyphs" >Groupe Classe</text>
<rect x="1359.5" y="362.5" width="29" height="29" fill="#cdcdcd" stroke="#c2c2c2" stroke-width="1"/>
<path d="M1375,366.8 H1383.5 M1365.5,377.5 L1374.5,367.5 M1364.5,383 H1373" stroke="#a0a0a0" stroke-width="1.8" fill="none"/>
<path d="M1384.5,367.5 L1381,381 M1365,385.5 H1373 L1375,383 M1369,381 L1375,370 H1381 L1379,380 M1373.5,381 L1376,373" stroke="#f4f4f4" stroke-width="1.1" fill="none"/>
<rect x="1208" y="921" width="474" height="1.2" fill="#7d7d7d" />
<rect x="493" y="929.5" width="82" height="25" fill="#e1e1e1" stroke="#adadad" stroke-width="1"/>
<path d="M505.5,937 L517.5,948.5 M517.5,937 L505.5,948.5" stroke="#e0461e" stroke-width="3.2"/>
<text x="525.6" y="947.2" font-size="14" fill="#000" textLength="39.6" lengthAdjust="spacingAndGlyphs" >Fermer</text>
<rect x="0" y="963" width="1682" height="28" fill="#eaf0f4" />
<rect x="485" y="962" width="1197" height="1" fill="#f9f9f9" />
<rect x="973.0" y="319.5" width="1.3" height="392.0" fill="rgba(0,0,0,0.42)"/>
<rect x="681.5" y="710.5" width="291.5" height="1.3" fill="rgba(0,0,0,0.42)"/>
<rect x="974.2" y="319.5" width="1.3" height="393.2" fill="rgba(0,0,0,0.2)"/>
<rect x="681.5" y="711.7" width="292.7" height="1.3" fill="rgba(0,0,0,0.2)"/>
<rect x="975.5" y="319.5" width="1.3" height="394.5" fill="rgba(0,0,0,0.08)"/>
<rect x="681.5" y="713.0" width="294.0" height="1.3" fill="rgba(0,0,0,0.08)"/>
<rect x="673.5" y="311.5" width="299.0" height="398.5" fill="#f2f2f2" stroke="#c6c6c6" stroke-width="1"/>
<rect x="676.5" y="616" width="288" height="27" fill="#91c9f7" />
<rect x="708" y="618.8" width="99.5" height="25.5" fill="#92c766" />
<text x="717.6" y="333" font-size="14" fill="#000" textLength="83.7" lengthAdjust="spacingAndGlyphs" >Création (F9)</text>
<text x="717.6" y="360.4" font-size="14" fill="#000" textLength="113.2" lengthAdjust="spacingAndGlyphs" >Modification (F1)</text>
<text x="717.6" y="388" font-size="14" fill="#000" textLength="103.4" lengthAdjust="spacingAndGlyphs" >Duplication (F7)</text>
<text x="717.6" y="415.6" font-size="14" fill="#000" textLength="164.9" lengthAdjust="spacingAndGlyphs" >Suppression Logique (F6)</text>
<text x="717.6" y="443.2" font-size="14" fill="#000" textLength="65.4" lengthAdjust="spacingAndGlyphs" >Détail (F8)</text>
<text x="717.6" y="479.8" font-size="14" fill="#000" textLength="106.4" lengthAdjust="spacingAndGlyphs" >Objets Autorisés</text>
<text x="717.6" y="506.7" font-size="14" fill="#000" textLength="99.3" lengthAdjust="spacingAndGlyphs" >Objets Interdits</text>
<text x="717.6" y="543.3" font-size="14" fill="#000" textLength="170.0" lengthAdjust="spacingAndGlyphs" >Accès Suivi de Fabrication</text>
<text x="717.6" y="579.3" font-size="14" fill="#000" textLength="186.1" lengthAdjust="spacingAndGlyphs" >Simulation Navigateur Riche</text>
<text x="717.6" y="607" font-size="14" fill="#000" textLength="179.8" lengthAdjust="spacingAndGlyphs" >Simulation Navigateur WEB</text>
<text x="717.6" y="634.3" font-size="14" fill="#000" textLength="78.1" lengthAdjust="spacingAndGlyphs" >Exploitation</text>
<text x="717.6" y="670.6" font-size="14" fill="#000" textLength="147.1" lengthAdjust="spacingAndGlyphs" >Définition Filtres et Tris</text>
<text x="717.6" y="697.9" font-size="14" fill="#000" textLength="137.4" lengthAdjust="spacingAndGlyphs" >Condition par Défaut</text>
<rect x="711.5" y="456" width="257.0" height="1" fill="#d7d7d7"/>
<rect x="711.5" y="520" width="257.0" height="1" fill="#d7d7d7"/>
<rect x="711.5" y="556" width="257.0" height="1" fill="#d7d7d7"/>
<rect x="711.5" y="647.5" width="257.0" height="1" fill="#d7d7d7"/>
<path d="M953,626 L957,630 L953,634" fill="none" stroke="#333" stroke-width="1.1"/>
<rect x="1288.0" y="620" width="1.3" height="381.5" fill="rgba(0,0,0,0.42)"/>
<rect x="973.5" y="1000.5" width="314.5" height="1.3" fill="rgba(0,0,0,0.42)"/>
<rect x="1289.2" y="620" width="1.3" height="382.7" fill="rgba(0,0,0,0.2)"/>
<rect x="973.5" y="1001.7" width="315.7" height="1.3" fill="rgba(0,0,0,0.2)"/>
<rect x="1290.5" y="620" width="1.3" height="384.0" fill="rgba(0,0,0,0.08)"/>
<rect x="973.5" y="1003.0" width="317.0" height="1.3" fill="rgba(0,0,0,0.08)"/>
<rect x="965.5" y="612" width="322.0" height="388" fill="#f2f2f2" stroke="#c6c6c6" stroke-width="1"/>
<rect x="968.5" y="964" width="319" height="27" fill="#91c9f7" />
<rect x="1003.5" y="965" width="186.5" height="26" fill="#92c766" />
<text x="1009.4" y="634.2" font-size="14" fill="#000" textLength="160.9" lengthAdjust="spacingAndGlyphs" >Trace Serveur DIAPASON</text>
<text x="1009.4" y="661.8" font-size="14" fill="#000" textLength="128.2" lengthAdjust="spacingAndGlyphs" >Purge Trace Serveur</text>
<text x="1009.4" y="689.4" font-size="14" fill="#000" textLength="164.9" lengthAdjust="spacingAndGlyphs" >Historique Traces Serveur</text>
<text x="1009.4" y="717.0" font-size="14" fill="#000" textLength="211.1" lengthAdjust="spacingAndGlyphs" >Purge Programmes en Mémoire</text>
<text x="1009.4" y="744.6" font-size="14" fill="#000" textLength="106.5" lengthAdjust="spacingAndGlyphs" >Statistiques BDD</text>
<text x="1009.4" y="772.2" font-size="14" fill="#000" textLength="204.3" lengthAdjust="spacingAndGlyphs" >Transfert Parametrage Interface</text>
<text x="1009.4" y="799.8" font-size="14" fill="#000" textLength="125.4" lengthAdjust="spacingAndGlyphs" >Reset Mot de Passe</text>
<text x="1009.4" y="827.4" font-size="14" fill="#000" textLength="216.2" lengthAdjust="spacingAndGlyphs" >Reset Mémorisation du Contexte</text>
<text x="1009.4" y="855.0" font-size="14" fill="#000" textLength="194.5" lengthAdjust="spacingAndGlyphs" >Reset Procédure à l&#x27;Ouverture</text>
<text x="1009.4" y="882.6" font-size="14" fill="#000" textLength="76.9" lengthAdjust="spacingAndGlyphs" >Reset Droits</text>
<text x="1009.4" y="918.9" font-size="14" fill="#000" textLength="157" lengthAdjust="spacingAndGlyphs" >Exportation de Données</text>
<text x="1009.4" y="946.5" font-size="14" fill="#000" textLength="159" lengthAdjust="spacingAndGlyphs" >Importation de Données</text>
<text x="1009.4" y="982.8" font-size="14" fill="#000" textLength="172.4" lengthAdjust="spacingAndGlyphs" >Exploitation Fonctionnelle</text>
<rect x="1003" y="894.5" width="284" height="1" fill="#d7d7d7"/>
<rect x="1003" y="959" width="284" height="1" fill="#d7d7d7"/>
<rect x="1655.0" y="621.5" width="1.3" height="380.0" fill="rgba(0,0,0,0.42)"/>
<rect x="1295.5" y="1000.5" width="359.5" height="1.3" fill="rgba(0,0,0,0.42)"/>
<rect x="1656.2" y="621.5" width="1.3" height="381.2" fill="rgba(0,0,0,0.2)"/>
<rect x="1295.5" y="1001.7" width="360.7" height="1.3" fill="rgba(0,0,0,0.2)"/>
<rect x="1657.5" y="621.5" width="1.3" height="382.5" fill="rgba(0,0,0,0.08)"/>
<rect x="1295.5" y="1003.0" width="362.0" height="1.3" fill="rgba(0,0,0,0.08)"/>
<rect x="1287.5" y="613.5" width="367.0" height="386.5" fill="#f2f2f2" stroke="#c6c6c6" stroke-width="1"/>
<rect x="1322" y="620" width="289.5" height="371" fill="#f0ef63" />
<text x="1331.8" y="635.5" font-size="14" fill="#000" textLength="236.9" lengthAdjust="spacingAndGlyphs" >Paramétrage Gestionnaire de Tâches</text>
<text x="1331.8" y="662.8" font-size="14" fill="#000" textLength="205.4" lengthAdjust="spacingAndGlyphs" >Paramétrage Mise à jour Stocks</text>
<text x="1331.8" y="690.2" font-size="14" fill="#000" textLength="177.0" lengthAdjust="spacingAndGlyphs" >Paramétrage Gestion Stock</text>
<text x="1331.8" y="717.6" font-size="14" fill="#000" textLength="155.6" lengthAdjust="spacingAndGlyphs" >Paramétrage Logistique</text>
<text x="1331.8" y="753.6" font-size="14" fill="#000" textLength="254.7" lengthAdjust="spacingAndGlyphs" >Traçabilité Articles Standard / Nom.Ptr.</text>
<text x="1331.8" y="781" font-size="14" fill="#000" textLength="248.0" lengthAdjust="spacingAndGlyphs" >Traçabilité Articles à la Cde / Nom.Ptr.</text>
<text x="1331.8" y="817.2" font-size="14" fill="#000" textLength="209.3" lengthAdjust="spacingAndGlyphs" >Mise à jour Tables de Traduction</text>
<text x="1331.8" y="853.4" font-size="14" fill="#000" textLength="131.6" lengthAdjust="spacingAndGlyphs" >Paramétrage Clients</text>
<text x="1331.8" y="889.6" font-size="14" fill="#000" textLength="216.8" lengthAdjust="spacingAndGlyphs" >Paramétrage Multi-Gestionnaires</text>
<text x="1331.8" y="925.8" font-size="14" fill="#000" textLength="225.1" lengthAdjust="spacingAndGlyphs" >Renum. Navigateur (ordre interne)</text>
<text x="1331.8" y="953.2" font-size="14" fill="#000" textLength="203.8" lengthAdjust="spacingAndGlyphs" >Renum. Navigateur (par libellé)</text>
<text x="1331.8" y="980.6" font-size="14" fill="#000" textLength="180.5" lengthAdjust="spacingAndGlyphs" >Intégrité Favoris Navigateur</text>
<rect x="1325" y="731" width="326" height="1" fill="rgba(0,0,0,0.12)"/>
<rect x="1325" y="794.5" width="326" height="1" fill="rgba(0,0,0,0.12)"/>
<rect x="1325" y="830.5" width="326" height="1" fill="rgba(0,0,0,0.12)"/>
<rect x="1325" y="866.5" width="326" height="1" fill="rgba(0,0,0,0.12)"/>
<rect x="1325" y="903" width="326" height="1" fill="rgba(0,0,0,0.12)"/>
<path d="M1273,973.5 L1277,977.5 L1273,981.5" fill="none" stroke="#333" stroke-width="1.1"/>
<path d="M1275.50,975.50 L1275.50,1000.30 L1281.39,994.57 L1285.73,1004.33 L1289.45,1002.62 L1285.27,993.01 L1293.33,993.01Z" fill="none" stroke="#fff" stroke-width="4.5" stroke-linejoin="miter"/>
<path d="M1275.50,975.50 L1275.50,1000.30 L1281.39,994.57 L1285.73,1004.33 L1289.45,1002.62 L1285.27,993.01 L1293.33,993.01Z" fill="#fff" stroke="#000" stroke-width="2.4" stroke-linejoin="miter"/>
</svg>
</body></html>
